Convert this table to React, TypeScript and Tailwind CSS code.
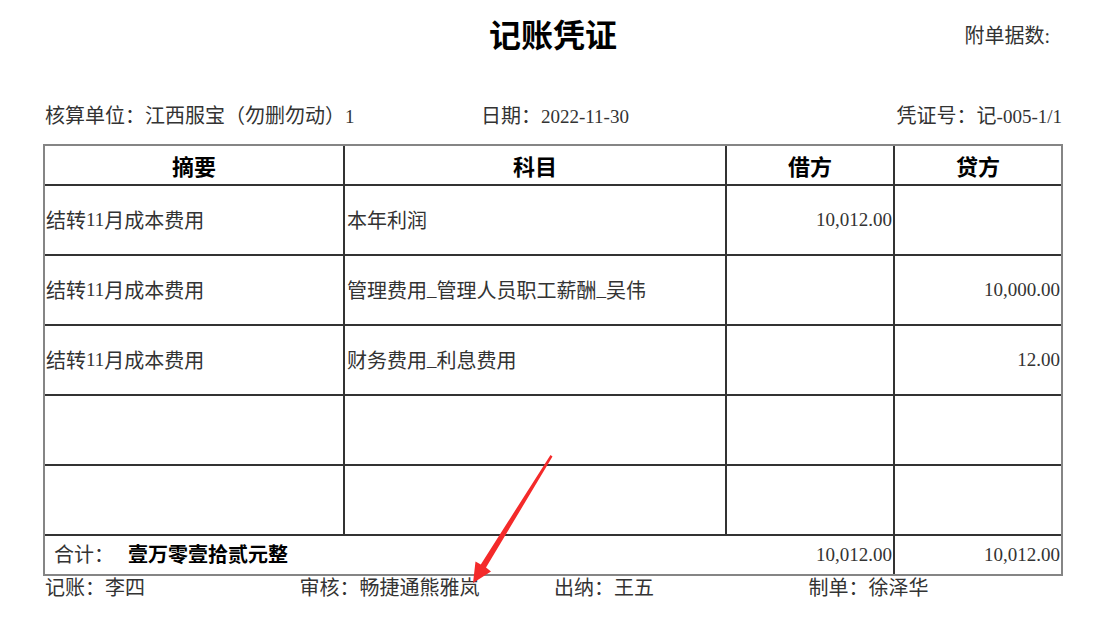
import React from 'react';

const FONT = '"Liberation Serif", "Noto Sans CJK SC", serif';
const HEAD_FONT = '"Noto Sans CJK SC", sans-serif';

interface EntryRow {
  summary: string;
  account: string;
  debit: string;
  credit: string;
}

const rows: EntryRow[] = [
  { summary: '结转11月成本费用', account: '本年利润', debit: '10,012.00', credit: '' },
  { summary: '结转11月成本费用', account: '管理费用_管理人员职工薪酬_吴伟', debit: '', credit: '10,000.00' },
  { summary: '结转11月成本费用', account: '财务费用_利息费用', debit: '', credit: '12.00' },
  { summary: '', account: '', debit: '', credit: '' },
  { summary: '', account: '', debit: '', credit: '' },
];

const footer = [
  { label: '记账：', name: '李四' },
  { label: '审核：', name: '畅捷通熊雅岚' },
  { label: '出纳：', name: '王五' },
  { label: '制单：', name: '徐泽华' },
];

// CJK glyphs render a touch larger than the latin digits in the print layout
function Mixed({ text }: { text: string }) {
  const parts = text.split(/([\u3000-\u9fff\uff00-\uffef]+)/);
  return (
    <>
      {parts.map((p, i) =>
        /[\u3000-\u9fff\uff00-\uffef]/.test(p) ? (
          <span key={i} className="text-[20px]">
            {p}
          </span>
        ) : (
          <span key={i}>{p}</span>
        ),
      )}
    </>
  );
}

function HeaderCell({ text, className }: { text: string; className: string }) {
  return (
    <div
      className={`flex items-center justify-center text-[22px] font-bold text-black ${className}`}
      style={{ fontFamily: HEAD_FONT }}
    >
      {text}
    </div>
  );
}

export default function App() {
  return (
    <div
      className="relative w-[1098px] h-[627px] bg-white text-[#333] overflow-hidden"
      style={{ fontFamily: FONT }}
    >
      <div className="ml-[43px] w-[1020px] pt-[16px]">
        <div className="grid grid-cols-[1fr_auto_1fr] items-center h-[40px]">
          <div />
          <h1 className="text-[32px] leading-[40px] font-bold text-black">记账凭证</h1>
          <div className="text-right pr-[13px] text-[20px] leading-[24px]">附单据数:</div>
        </div>

        <div className="flex items-center mt-[48px] mb-[16px] h-[24px] pl-[2px] text-[19px] leading-[24px]">
          <div className="w-[436px]">
            <Mixed text="核算单位：江西服宝（勿删勿动）1" />
          </div>
          <div>
            <Mixed text="日期：2022-11-30" />
          </div>
          <div className="ml-auto pr-px">
            <Mixed text="凭证号：记-005-1/1" />
          </div>
        </div>

        <div className="border-2 border-[#858585]">
          <div className="flex h-[40px] border-b-2 border-[#333]">
            <HeaderCell text="摘要" className="w-[300px] border-r-2 border-[#333]" />
            <HeaderCell text="科目" className="w-[382px] border-r-2 border-[#333]" />
            <HeaderCell text="借方" className="w-[168px] border-r-2 border-[#333]" />
            <HeaderCell text="贷方" className="flex-1" />
          </div>

          {rows.map((row, i) => (
            <div key={i} className="flex h-[70px] border-b-2 border-[#333] text-[19px]">
              <div className="w-[300px] border-r-2 border-[#333] flex items-center pl-px pt-px">
                <Mixed text={row.summary} />
              </div>
              <div className="w-[382px] border-r-2 border-[#333] flex items-center pl-[2px] pt-px">
                <Mixed text={row.account} />
              </div>
              <div className="w-[168px] border-r-2 border-[#333] flex items-center justify-end pr-px pt-px">
                {row.debit}
              </div>
              <div className="flex-1 flex items-center justify-end pr-px pt-px">{row.credit}</div>
            </div>
          ))}

          <div className="flex h-[38px] text-[19px]">
            <div className="w-[682px] flex items-center pl-[9px]">
              <span className="text-[20px]">合计：</span>
              <span className="ml-[14px] text-[20px] font-bold text-black">壹万零壹拾贰元整</span>
            </div>
            <div className="w-[168px] border-r-2 border-[#333] flex items-center justify-end pr-px">10,012.00</div>
            <div className="flex-1 flex items-center justify-end pr-px">10,012.00</div>
          </div>
        </div>

        <div className="grid grid-cols-4 pl-[2px] pt-px h-[24px] text-[20px] leading-[22px]">
          {footer.map((f) => (
            <div key={f.label}>
              {f.label}
              {f.name}
            </div>
          ))}
        </div>
      </div>

      <svg className="absolute inset-0 pointer-events-none" width="1098" height="627" viewBox="0 0 1098 627">
        <polygon
          points="550.5,455 552.5,456.5 486,567.6 491,571.5 473,583 475.5,561.5 480.8,564.4"
          fill="#f42a2a"
        />
      </svg>
    </div>
  );
}
